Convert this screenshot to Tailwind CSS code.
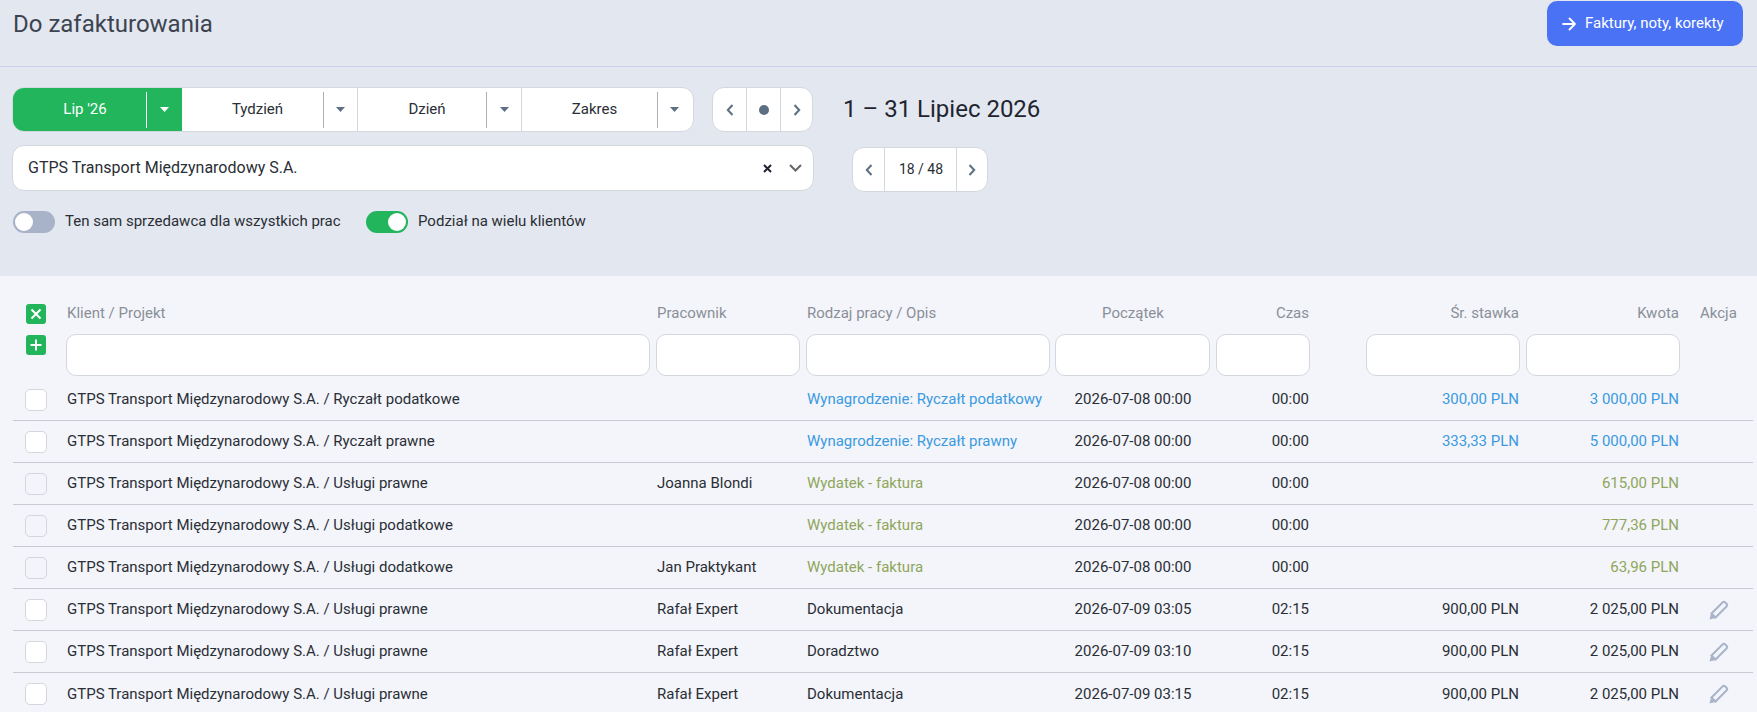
<!DOCTYPE html>
<html lang="pl">

<head>
    <meta charset="UTF-8">
    <meta name="viewport" content="width=device-width, initial-scale=1.0">
    <script src="https://cdn.jsdelivr.net/npm/@tailwindcss/browser@4"></script>
</head>

<body class="h-screen overflow-hidden bg-[#f3f5fa] font-['Roboto',sans-serif] text-[15px] text-[#2a2e35]">
    <div class="h-[276px] bg-[#e3e7ef]">
        <div class="flex h-[67px] items-start justify-between border-b border-[#c8d2f0] pl-[13px] pr-[14px]">
            <h1 class="mt-[6px] text-[24px] leading-[36px] text-[#3d4451]">Do zafakturowania</h1>
            <a href="#" class="mt-px flex h-[45px] w-[196px] items-center rounded-[10px] bg-[#4a72f5] pl-[14px] text-white">
                <svg class="mr-[8px] h-[16px] w-[16px]" viewBox="0 0 16 16" fill="none" stroke="currentColor" stroke-width="1.8" stroke-linecap="round" stroke-linejoin="round"><path d="M2 8h12M8.500 2.500 14 8l-5.500 5.500" /></svg>
                Faktury, noty, korekty
            </a>
        </div>

        <div class="flex pl-[12px] pt-[20px]">
            <div class="flex h-[45px] w-[682px] overflow-hidden rounded-[12px] border border-[#d3d7de] bg-white">
                <div class="flex w-[169px] items-center bg-[#22b55b] text-white">
                    <span class="w-[133px] pl-[11px] text-center">Lip '26</span>
                    <span class="h-[36px] border-l border-white"></span>
                    <svg class="ml-[13px] h-[5px] w-[9px]" viewBox="0 0 9 5" fill="currentColor"><path d="M0 0h9L4.500 5z" /></svg>
                </div>
                <div class="flex w-[176px] items-center border-r border-[#d3d7de]">
                    <span class="w-[141px] pl-[10px] text-center">Tydzień</span>
                    <span class="h-[36px] border-l border-[#a9aeb7]"></span>
                    <svg class="ml-[12px] h-[5px] w-[9px] text-[#5d6f82]" viewBox="0 0 9 5" fill="currentColor"><path d="M0 0h9L4.500 5z" /></svg>
                </div>
                <div class="flex w-[164px] items-center border-r border-[#d3d7de]">
                    <span class="w-[128px] pl-[10px] text-center">Dzień</span>
                    <span class="h-[36px] border-l border-[#a9aeb7]"></span>
                    <svg class="ml-[13px] h-[5px] w-[9px] text-[#5d6f82]" viewBox="0 0 9 5" fill="currentColor"><path d="M0 0h9L4.500 5z" /></svg>
                </div>
                <div class="flex flex-1 items-center">
                    <span class="w-[135px] pl-[10px] text-center">Zakres</span>
                    <span class="h-[36px] border-l border-[#a9aeb7]"></span>
                    <svg class="ml-[12px] h-[5px] w-[9px] text-[#5d6f82]" viewBox="0 0 9 5" fill="currentColor"><path d="M0 0h9L4.500 5z" /></svg>
                </div>
            </div>

            <div class="ml-[18px] flex h-[45px] w-[101px] overflow-hidden rounded-[12px] border border-[#d3d7de] bg-white text-[#5d6f82]">
                <div class="flex w-[34px] items-center justify-center border-r border-[#d3d7de]">
                    <svg class="h-[12px] w-[8px]" viewBox="0 0 8 12" fill="none" stroke="currentColor" stroke-width="2"><path d="M6.500 1 1.800 6l4.700 5" /></svg>
                </div>
                <div class="flex w-[34px] items-center justify-center border-r border-[#d3d7de]">
                    <span class="h-[10px] w-[10px] rounded-full bg-[#5d6f82]"></span>
                </div>
                <div class="flex flex-1 items-center justify-center">
                    <svg class="h-[12px] w-[8px]" viewBox="0 0 8 12" fill="none" stroke="currentColor" stroke-width="2"><path d="M1.500 1 6.200 6l-4.700 5" /></svg>
                </div>
            </div>

            <div class="ml-[30px] text-[24px] leading-[44px] text-[#1f2530]">1 – 31 Lipiec 2026</div>
        </div>

        <div class="flex items-start pl-[12px] pt-[13px]">
            <div class="flex h-[46px] w-[802px] items-center rounded-[12px] border border-[#d3d7de] bg-white pl-[15px] pr-[11px] text-[16px]">
                <span class="flex-1 pb-px">GTPS Transport Międzynarodowy S.A.</span>
                <svg class="h-[9px] w-[9px] text-[#1f2530]" viewBox="0 0 9 9" fill="none" stroke="currentColor" stroke-width="2"><path d="M1 1l7 7M8 1 1 8" /></svg>
                <svg class="ml-[17px] h-[8px] w-[13px] text-[#666]" viewBox="0 0 13 8" fill="none" stroke="currentColor" stroke-width="2"><path d="M1 1l5.500 5.500L12 1" /></svg>
            </div>

            <div class="ml-[38px] mt-[2px] flex h-[45px] w-[136px] overflow-hidden rounded-[12px] border border-[#d3d7de] bg-white text-[#5d6f82]">
                <div class="flex w-[32px] items-center justify-center border-r border-[#d3d7de]">
                    <svg class="h-[12px] w-[8px]" viewBox="0 0 8 12" fill="none" stroke="currentColor" stroke-width="2"><path d="M6.500 1 1.800 6l4.700 5" /></svg>
                </div>
                <div class="flex w-[72px] items-center justify-center border-r border-[#d3d7de] pl-px text-[14px] text-[#2a2e35]">18 / 48</div>
                <div class="flex flex-1 items-center justify-center">
                    <svg class="h-[12px] w-[8px]" viewBox="0 0 8 12" fill="none" stroke="currentColor" stroke-width="2"><path d="M1.500 1 6.200 6l-4.700 5" /></svg>
                </div>
            </div>
        </div>

        <div class="flex items-center pl-[13px] pt-[18px]">
            <span class="flex h-[22px] w-[42px] items-center rounded-full bg-[#a8b2c8] pl-[2px]"><span class="h-[18px] w-[18px] rounded-full bg-white"></span></span>
            <span class="ml-[10px] w-[301px] pb-px">Ten sam sprzedawca dla wszystkich prac</span>
            <span class="flex h-[22px] w-[42px] items-center justify-end rounded-full bg-[#22b55b] pr-[2px]"><span class="h-[18px] w-[18px] rounded-full bg-white"></span></span>
            <span class="ml-[10px] pb-px">Podział na wielu klientów</span>
        </div>
    </div>

    <div class="pl-[13px] pr-[4px]">
        <div class="grid h-[103px] grid-cols-[53px_590px_150px_249px_161px_100px_50px_160px_154px_1fr] grid-rows-[58px_42px] items-center text-[#8a8f98]">
            <div class="row-span-2 self-start pl-[13px] pt-[28px]">
                <span class="flex h-[20px] w-[20px] items-center justify-center rounded-[3px] bg-[#22b55b] text-white">
                    <svg class="h-[12px] w-[12px]" viewBox="0 0 12 12" fill="none" stroke="currentColor" stroke-width="2"><path d="M1.500 1.500l9 9M10.500 1.500l-9 9" /></svg>
                </span>
                <span class="mt-[11px] flex h-[20px] w-[20px] items-center justify-center rounded-[3px] bg-[#22b55b] text-white">
                    <svg class="h-[12px] w-[12px]" viewBox="0 0 12 12" fill="none" stroke="currentColor" stroke-width="2"><path d="M6 .5v11M.5 6h11" /></svg>
                </span>
            </div>
            <div class="self-end pb-[10px] pl-px">Klient / Projekt</div>
            <div class="self-end pb-[10px] pl-px">Pracownik</div>
            <div class="self-end pb-[10px] pl-px">Rodzaj pracy / Opis</div>
            <div class="self-end pb-[10px] pr-[5px] text-center">Początek</div>
            <div class="self-end pb-[10px] pr-[7px] text-right">Czas</div>
            <div></div>
            <div class="self-end pb-[10px] pr-[7px] text-right">Śr. stawka</div>
            <div class="self-end pb-[10px] pr-px text-right">Kwota</div>
            <div class="self-end pb-[10px] pl-[20px]">Akcja</div>

            <input class="col-start-2 h-[42px] w-[584px] rounded-[10px] border border-[#d3d7de] bg-white">
            <input class="h-[42px] w-[144px] rounded-[10px] border border-[#d3d7de] bg-white">
            <input class="h-[42px] w-[244px] rounded-[10px] border border-[#d3d7de] bg-white">
            <input class="h-[42px] w-[155px] rounded-[10px] border border-[#d3d7de] bg-white">
            <input class="h-[42px] w-[94px] rounded-[10px] border border-[#d3d7de] bg-white">
            <div></div>
            <input class="h-[42px] w-[154px] rounded-[10px] border border-[#d3d7de] bg-white">
            <input class="h-[42px] w-[154px] rounded-[10px] border border-[#d3d7de] bg-white">
        </div>

        <div class="divide-y divide-[#c6cad2]" id="rows"></div>
    </div>

    <script>
        const pencil = `<svg class="h-[20px] w-[20px] text-[#a9b4cb]" viewBox="0 0 20 20" fill="none" stroke="currentColor" stroke-width="2"><path d="M2.500 13.500 13.500 2.500a2 2 0 0 1 2.800 0l1.200 1.200a2 2 0 0 1 0 2.800L6.500 17.500z" /><path d="M2 13.500.5 19.500 6.500 18z" fill="currentColor" stroke="none" /></svg>`;

        const blue = 'text-[#3b9ae1]';
        const olive = 'text-[#8fa65a]';

        const rows = [
            { project: 'Ryczałt podatkowe', type: 'Wynagrodzenie: Ryczałt podatkowy', color: blue, start: '2026-07-08 00:00', time: '00:00', rate: '300,00 PLN', amount: '3 000,00 PLN' },
            { project: 'Ryczałt prawne', type: 'Wynagrodzenie: Ryczałt prawny', color: blue, start: '2026-07-08 00:00', time: '00:00', rate: '333,33 PLN', amount: '5 000,00 PLN' },
            { project: 'Usługi prawne', worker: 'Joanna Blondi', type: 'Wydatek - faktura', color: olive, start: '2026-07-08 00:00', time: '00:00', amount: '615,00 PLN', locked: true },
            { project: 'Usługi podatkowe', type: 'Wydatek - faktura', color: olive, start: '2026-07-08 00:00', time: '00:00', amount: '777,36 PLN', locked: true },
            { project: 'Usługi dodatkowe', worker: 'Jan Praktykant', type: 'Wydatek - faktura', color: olive, start: '2026-07-08 00:00', time: '00:00', amount: '63,96 PLN', locked: true },
            { project: 'Usługi prawne', worker: 'Rafał Expert', type: 'Dokumentacja', color: '', start: '2026-07-09 03:05', time: '02:15', rate: '900,00 PLN', amount: '2 025,00 PLN', edit: true },
            { project: 'Usługi prawne', worker: 'Rafał Expert', type: 'Doradztwo', color: '', start: '2026-07-09 03:10', time: '02:15', rate: '900,00 PLN', amount: '2 025,00 PLN', edit: true },
            { project: 'Usługi prawne', worker: 'Rafał Expert', type: 'Dokumentacja', color: '', start: '2026-07-09 03:15', time: '02:15', rate: '900,00 PLN', amount: '2 025,00 PLN', edit: true },
        ];

        function createRow(row) {
            return `
            <div class="grid h-[42px] grid-cols-[53px_590px_150px_249px_161px_100px_50px_160px_154px_1fr] items-center">
                <div class="pl-[12px]"><span class="block h-[22px] w-[22px] rounded-[5px] border border-[#d3d7de] ${row.locked ? 'bg-[#f3f5fa]' : 'bg-white'}"></span></div>
                <div class="pl-px">GTPS Transport Międzynarodowy S.A. / ${row.project}</div>
                <div class="pl-px">${row.worker || ''}</div>
                <div class="pl-px ${row.color}">${row.type}</div>
                <div class="pr-[5px] text-center">${row.start}</div>
                <div class="pr-[7px] text-right">${row.time}</div>
                <div></div>
                <div class="pr-[7px] text-right ${row.color}">${row.rate || ''}</div>
                <div class="pr-px text-right ${row.color}">${row.amount}</div>
                <div class="flex pl-[29px]">${row.edit ? pencil : ''}</div>
            </div>`;
        }

        const rowsElement = document.getElementById('rows');
        rows.forEach(row => rowsElement.insertAdjacentHTML('beforeend', createRow(row)));
    </script>
</body>

</html>
